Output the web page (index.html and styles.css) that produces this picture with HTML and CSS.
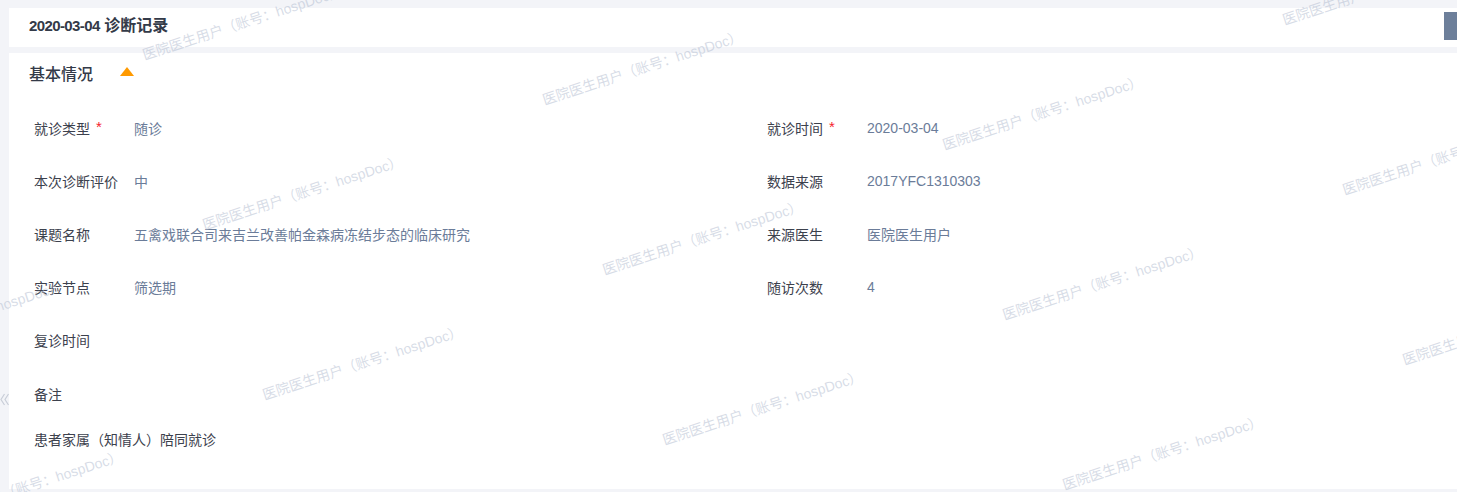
FILE: index.html
```html
<!DOCTYPE html>
<html lang="zh-CN">
<head>
<meta charset="utf-8">
<title>诊断记录</title>
<link rel="stylesheet" href="styles.css">
</head>
<body>
<div class="page">
  <div class="side-toggle">
    <svg width="9" height="13" viewBox="0 0 9 13"><polyline points="4.5,1 1,6.5 4.5,12" fill="none" stroke="#c9ced8" stroke-width="1.2"/><polyline points="8.5,1 5,6.5 8.5,12" fill="none" stroke="#c9ced8" stroke-width="1.2"/></svg>
  </div>
  <div class="main">
    <header class="card head-card">
      <h1 class="head-title"><span class="head-date">2020-03-04</span> 诊断记录</h1>
      <span class="head-btn"></span>
    </header>
    <section class="card info-card">
      <div class="section-head">
        <h2 class="section-title">基本情况</h2>
        <svg class="section-arrow" width="14" height="9" viewBox="0 0 14 9"><polygon points="7,0 14,9 0,9" fill="#ff9a00"/></svg>
      </div>
      <div class="fields">
        <div class="field"><span class="label">就诊类型<i class="req">*</i></span><span class="value">随诊</span></div>
        <div class="field"><span class="label">就诊时间<i class="req">*</i></span><span class="value">2020-03-04</span></div>
        <div class="field"><span class="label">本次诊断评价</span><span class="value">中</span></div>
        <div class="field"><span class="label">数据来源</span><span class="value">2017YFC1310303</span></div>
        <div class="field"><span class="label">课题名称</span><span class="value">五禽戏联合司来吉兰改善帕金森病冻结步态的临床研究</span></div>
        <div class="field"><span class="label">来源医生</span><span class="value">医院医生用户</span></div>
        <div class="field"><span class="label">实验节点</span><span class="value">筛选期</span></div>
        <div class="field"><span class="label">随访次数</span><span class="value">4</span></div>
        <div class="field"><span class="label">复诊时间</span><span class="value"></span></div>
      </div>
      <div class="remark">
        <div class="remark-label">备注</div>
        <div class="remark-text">患者家属（知情人）陪同就诊</div>
      </div>
    </section>
  </div>
</div>
<div class="watermarks">
  <span class="wm wm1">医院医生用户（账号：hospDoc）</span>
  <span class="wm wm2">医院医生用户（账号：hospDoc）</span>
  <span class="wm wm3">医院医生用户（账号：hospDoc）</span>
  <span class="wm wm4">医院医生用户（账号：hospDoc）</span>
  <span class="wm wm5">医院医生用户（账号：hospDoc）</span>
  <span class="wm wm6">医院医生用户（账号：hospDoc）</span>
  <span class="wm wm7">医院医生用户（账号：hospDoc）</span>
  <span class="wm wm8">医院医生用户（账号：hospDoc）</span>
  <span class="wm wm9">医院医生用户（账号：hospDoc）</span>
  <span class="wm wm10">医院医生用户（账号：hospDoc）</span>
  <span class="wm wm11">医院医生用户（账号：hospDoc）</span>
  <span class="wm wm12">医院医生用户（账号：hospDoc）</span>
  <span class="wm wm13">医院医生用户（账号：hospDoc）</span>
  <span class="wm wm14">医院医生用户（账号：hospDoc）</span>
</div>
</body>
</html>
```

FILE: styles.css
```css
* { box-sizing: border-box; }
html, body {
  margin: 0;
  padding: 0;
  background: #f3f4f8;
  font-family: "Liberation Sans", "Noto Sans CJK SC", sans-serif;
  overflow: hidden;
}
.page {
  position: relative;
  height: 492px;
  padding: 8px 0 0 9px;
}
.side-toggle {
  position: absolute;
  left: 0;
  top: 393px;
  line-height: 0;
}
.main {
  display: flex;
  flex-direction: column;
  gap: 6px;
}
.card {
  background: #fff;
}
.head-card {
  height: 39px;
  display: flex;
  align-items: center;
  justify-content: space-between;
  padding-left: 20px;
}
.head-title {
  margin: 0 0 3px;
  font-size: 16px;
  line-height: 20px;
  font-weight: 700;
  color: #333a48;
}
.head-date {
  font-size: 15px;
  letter-spacing: -0.6px;
}
.head-btn {
  width: 13px;
  height: 28px;
  background: #6d7f9a;
  margin-bottom: 3px;
}
.info-card {
  height: 436px;
  padding: 0 0 0 20px;
}
.section-head {
  height: 40px;
  display: flex;
  align-items: center;
  gap: 27px;
}
.section-title {
  margin: 0;
  font-size: 16px;
  font-weight: 500;
  color: #333a48;
}
.section-arrow {
  margin-top: -3px;
}
.fields {
  display: grid;
  grid-template-columns: 733px 1fr;
  grid-auto-rows: 53px;
  padding: 8px 0 0 5px;
}
.field {
  display: flex;
  align-items: center;
  font-size: 14px;
}
.label {
  width: 100px;
  flex: none;
  color: #3c414d;
}
.req {
  font-style: normal;
  color: #f5222d;
  margin-left: 6px;
  font-size: 15px;
  position: relative;
  top: -2px;
}
.value {
  color: #6b7c99;
}
.remark {
  padding: 20px 0 0 5px;
  font-size: 14px;
  color: #3c414d;
}
.remark-label {
  line-height: 18px;
}
.remark-text {
  margin-top: 27px;
  line-height: 18px;
}
.watermarks {
  position: absolute;
  inset: 0;
  overflow: hidden;
  pointer-events: none;
}
.wm {
  position: absolute;
  font-size: 14px;
  line-height: 14px;
  white-space: nowrap;
  color: rgba(175, 186, 206, 0.5);
  transform-origin: 0 100%;
  transform: rotate(-18deg);
}
.wm1 { left: 145px; top: 48px; }
.wm2 { left: 545px; top: 93px; }
.wm3 { left: 945px; top: 138px; }
.wm4 { left: 1345px; top: 183px; }
.wm5 { left: 1285px; top: 13px; }
.wm6 { left: 205px; top: 218px; }
.wm7 { left: 605px; top: 263px; }
.wm8 { left: 1005px; top: 308px; }
.wm9 { left: 1405px; top: 353px; }
.wm10 { left: -135px; top: 343px; }
.wm11 { left: 265px; top: 388px; }
.wm12 { left: 665px; top: 433px; }
.wm13 { left: 1065px; top: 478px; }
.wm14 { left: -75px; top: 513px; }
```
